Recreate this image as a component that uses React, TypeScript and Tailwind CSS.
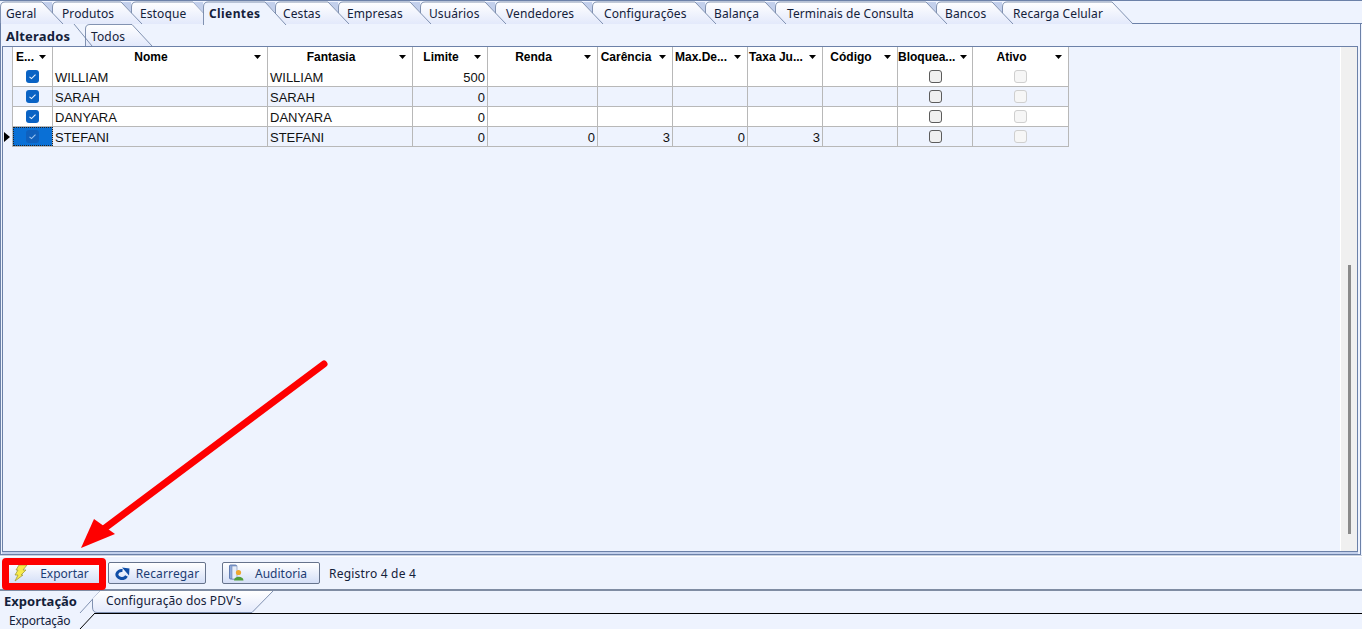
import React from 'react';

const uiFont = "font-['Noto_Sans',sans-serif]";
const gridFont = "font-['Liberation_Sans',Arial,sans-serif]";

const topTabs = [
  { label: 'Geral', start: 0, next: 52, textClass: 'pl-[6px]' },
  { label: 'Produtos', start: 52, next: 131, textClass: 'pl-[10px]' },
  { label: 'Estoque', start: 131, next: 203, textClass: 'pl-[9px]' },
  { label: 'Clientes', start: 203, next: 275, textClass: 'pl-[6px]', active: true },
  { label: 'Cestas', start: 275, next: 338, textClass: 'pl-[8px]' },
  { label: 'Empresas', start: 338, next: 420, textClass: 'pl-[9px]' },
  { label: 'Usuários', start: 420, next: 495, textClass: 'pl-[9px]' },
  { label: 'Vendedores', start: 495, next: 592, textClass: 'pl-[11px]' },
  { label: 'Configurações', start: 592, next: 705, textClass: 'pl-[12px]' },
  { label: 'Balança', start: 705, next: 775, textClass: 'pl-[9px]' },
  { label: 'Terminais de Consulta', start: 775, next: 936, textClass: 'pl-[12px]' },
  { label: 'Bancos', start: 936, next: 1002, textClass: 'pl-[9px]' },
  { label: 'Recarga Celular', start: 1002, next: 1122, textClass: 'pl-[11px]' },
];

const columns = [
  { label: 'E...', width: 'w-[40px]', left: true },
  { label: 'Nome', width: 'w-[215px]' },
  { label: 'Fantasia', width: 'w-[145px]' },
  { label: 'Limite', width: 'w-[75px]' },
  { label: 'Renda', width: 'w-[110px]' },
  { label: 'Carência', width: 'w-[75px]' },
  { label: 'Max.De...', width: 'w-[75px]' },
  { label: 'Taxa Ju...', width: 'w-[75px]' },
  { label: 'Código', width: 'w-[75px]' },
  { label: 'Bloquea...', width: 'w-[75px]' },
  { label: 'Ativo', width: 'w-[96px]' },
];

const rows = [
  { nome: 'WILLIAM', fantasia: 'WILLIAM', limite: '500', renda: '', carencia: '', max: '', taxa: '' },
  { nome: 'SARAH', fantasia: 'SARAH', limite: '0', renda: '', carencia: '', max: '', taxa: '' },
  { nome: 'DANYARA', fantasia: 'DANYARA', limite: '0', renda: '', carencia: '', max: '', taxa: '' },
  { nome: 'STEFANI', fantasia: 'STEFANI', limite: '0', renda: '0', carencia: '3', max: '0', taxa: '3' },
];

function TopTab({ tab, index }: { tab: (typeof topTabs)[number]; index: number }) {
  const w = tab.next - tab.start;
  const h = tab.active ? 24 : 23;
  const shape = `M0.5 ${h} L0.5 6 Q0.5 1 5 1 L${w - 10} 1 L${w + 11} ${h}`;
  return (
    <div
      className={`relative h-[23px] ${tab.textClass} ${tab.active ? 'font-bold tracking-[0.4px]' : 'tracking-[0.1px]'}`}
      style={{ width: w, zIndex: tab.active ? 50 : 30 - index }}
    >
      <svg className="absolute left-0 top-0 overflow-visible" width={w + 11} height={h}>
        {index > 0 && <path d="M-10 1 L0 1 L0 11 Z" fill="#c3d0ec" />}
        <path d={`${shape} Z`} fill={tab.active ? '#eef3fe' : 'url(#tabFill)'} />
        <path d={shape} fill="none" stroke="#64789d" strokeWidth="0.8" />
      </svg>
      <span className="relative block pt-[4px] leading-[18px] whitespace-nowrap">{tab.label}</span>
    </div>
  );
}

function Caret() {
  return (
    <svg width="7" height="4" viewBox="0 0 7 4" className="ml-[5px] mr-[6px] shrink-0">
      <path d="M0 0 H7 L3.5 4 Z" fill="#000" />
    </svg>
  );
}

function Check({ dim = false }: { dim?: boolean }) {
  return (
    <svg width="13" height="13" viewBox="0 0 13 13">
      <rect x="0" y="0" width="13" height="13" rx="3" fill={dim ? '#0f60bd' : '#0a63c4'} />
      <path d="M3.5 6.8 L5.5 8.6 L9.5 4.6" fill="none" stroke={dim ? '#9cc4ee' : '#e8f1fb'} strokeWidth="1.1" />
    </svg>
  );
}

function EmptyBox({ disabled = false }: { disabled?: boolean }) {
  return (
    <div
      className={`w-[13px] h-[13px] rounded-[3px] border ${
        disabled ? 'border-[#cfcfcf] bg-[#f6f6f6]' : 'border-[#5c5c5c] bg-[#f0f0f0]'
      }`}
    />
  );
}

function TextCell({ width, children, right = false }: { width: string; children?: React.ReactNode; right?: boolean }) {
  return (
    <div
      className={`${width} h-full shrink-0 pt-[2px] border-r border-[#b8b8b8] flex items-center whitespace-nowrap ${
        right ? 'justify-end pr-[2px]' : 'pl-[2px]'
      }`}
    >
      {children}
    </div>
  );
}

function BoxCell({ width, children }: { width: string; children: React.ReactNode }) {
  return (
    <div className={`${width} h-full shrink-0 border-r border-[#b8b8b8] flex items-center justify-center`}>
      {children}
    </div>
  );
}

function DataGrid() {
  return (
    <div className={`text-[13px] text-[#111] ${gridFont}`}>
      <div className="flex h-[20px] pl-[9px]">
        <div className="flex h-full bg-white border-l border-[#b8b8b8]">
          {columns.map((col) => (
            <div key={col.label} className={`${col.width} h-full flex items-center border-r border-[#b8b8b8] text-[12px] font-bold text-black`}>
              <span className={`flex-1 whitespace-nowrap ${col.left ? 'pl-[3px]' : 'text-center'}`}>{col.label}</span>
              <Caret />
            </div>
          ))}
        </div>
      </div>
      {rows.map((row, i) => {
        const last = i === rows.length - 1;
        return (
          <div key={row.nome} className="flex h-[20px]">
            <div className="w-[9px] h-full flex items-center justify-start pl-[1px]">
              {last && (
                <svg width="6" height="10" viewBox="0 0 6 10">
                  <path d="M0 0 L6 5 L0 10 Z" fill="#000" />
                </svg>
              )}
            </div>
            <div className={`flex h-full border-l border-b border-[#b8b8b8] ${i % 2 === 0 ? 'bg-white' : 'bg-[#eef3fe]'}`}>
              <div
                className={`w-[40px] h-full shrink-0 border-r border-[#b8b8b8] flex items-center justify-center ${
                  last ? 'bg-[#0a70d6] outline-1 outline-dotted -outline-offset-1 outline-[#222]' : ''
                }`}
              >
                <Check dim={last} />
              </div>
              <TextCell width="w-[215px]">{row.nome}</TextCell>
              <TextCell width="w-[145px]">{row.fantasia}</TextCell>
              <TextCell width="w-[75px]" right>{row.limite}</TextCell>
              <TextCell width="w-[110px]" right>{row.renda}</TextCell>
              <TextCell width="w-[75px]" right>{row.carencia}</TextCell>
              <TextCell width="w-[75px]" right>{row.max}</TextCell>
              <TextCell width="w-[75px]" right>{row.taxa}</TextCell>
              <TextCell width="w-[75px]" />
              <BoxCell width="w-[75px]"><EmptyBox /></BoxCell>
              <BoxCell width="w-[96px]"><EmptyBox disabled /></BoxCell>
            </div>
          </div>
        );
      })}
    </div>
  );
}

function BoltIcon() {
  return (
    <svg width="15" height="18" viewBox="0 0 15 18" className="shrink-0">
      <path d="M6 1 L14 1 L10 6 L13 6 L8 11 L10 11 L2 17 L5 11 L2 11 L5 6 L3 6 Z" fill="#f7ea4a" stroke="#a39c3c" strokeWidth="0.8" />
    </svg>
  );
}

function ReloadIcon() {
  return (
    <svg width="16" height="13" viewBox="0 0 16 13" className="shrink-0">
      <path d="M12.5 9 A5 4 0 1 1 8.5 3.5" fill="none" stroke="#0f4da6" strokeWidth="3" />
      <path d="M8 0.5 L15.5 1.5 L15 8.5 Z" fill="#0f4da6" />
    </svg>
  );
}

function AuditIcon() {
  return (
    <svg width="15" height="18" viewBox="0 0 15 18" className="shrink-0">
      <rect x="0.5" y="1" width="7" height="14" rx="1" fill="#8fa9db" stroke="#4a68a3" strokeWidth="0.8" />
      <rect x="3" y="2" width="5" height="13" fill="#e6edf9" stroke="#6f87b3" strokeWidth="0.6" />
      <circle cx="9.5" cy="8.5" r="2.6" fill="#eda72f" />
      <path d="M5 16.5 C5 11.5 14.5 11.5 14.5 16.5 Z" fill="#4f9d3a" />
    </svg>
  );
}

function ToolButton({ width, icon, label, iconClass, labelClass = '' }: { width: string; icon: React.ReactNode; label: string; iconClass: string; labelClass?: string }) {
  return (
    <button className={`${width} h-[22px] flex items-center rounded-[2px] border border-[#66738c] bg-linear-to-b from-[#ffffff] to-[#d5dff7] text-[#1c3c73] text-[12px] leading-none`}>
      <span className={iconClass}>{icon}</span>
      <span className={`flex-1 pt-[1px] text-center whitespace-nowrap ${labelClass}`}>{label}</span>
    </button>
  );
}

export default function App() {
  return (
    <div className={`relative w-[1362px] h-[629px] overflow-hidden flex flex-col bg-[#eef3fe] text-[12px] text-[#14213a] ${uiFont}`}>
      <svg className="absolute w-0 h-0">
        <defs>
          <linearGradient id="tabFill" x1="0" y1="0" x2="0" y2="1">
            <stop offset="0" stopColor="#ffffff" />
            <stop offset="1" stopColor="#e3e9fb" />
          </linearGradient>
        </defs>
      </svg>

      {/* abas de cima */}
      <div className="relative h-[24px] shrink-0 flex border-t border-b border-[#6c81a8]">
        {topTabs.map((tab, i) => (
          <TopTab key={tab.label} tab={tab} index={i} />
        ))}
      </div>

      {/* painel principal */}
      <div className="flex-1 min-h-0 mr-[1px] flex flex-col border-x border-b border-[#6c81a8] pr-[2px] pl-[1px]">
        <div className="relative h-[22px] shrink-0 flex">
          <div className="relative w-[83px] h-full pl-[4px] z-10 font-bold text-[13px] tracking-[0.2px]">
            <svg className="absolute left-0 top-0 overflow-visible" width="96" height="22">
              <path d="M72 0 L90 22" stroke="#64789d" strokeWidth="0.8" fill="none" />
            </svg>
            <span className="relative block pt-[3px] leading-[18px]">Alterados</span>
          </div>
          <div className="relative w-[60px] h-full pl-[6px] tracking-[0.14px]">
            <svg className="absolute left-0 top-0 overflow-visible" width="70" height="22">
              <path d="M0.5 22 L0.5 5 Q0.5 0.5 5 0.5 L47 0.5 L67 22 Z" fill="url(#tabFill)" />
              <path d="M0.5 22 L0.5 5 Q0.5 0.5 5 0.5 L47 0.5 L67 22" fill="none" stroke="#64789d" strokeWidth="0.8" />
            </svg>
            <span className="relative block pt-[4px] leading-[18px]">Todos</span>
          </div>
        </div>
        <div className="flex-1 min-h-0 flex border border-[#6c81a8] bg-[#eef3fe]">
          <div className="flex-1 min-w-0">
            <DataGrid />
          </div>
          <div className="w-[17px] shrink-0 bg-[#f0f0f0] border-l border-white flex justify-center pt-[218px]">
            <div className="w-[3px] h-[269px] bg-[#8a8a8a]" />
          </div>
        </div>
        <div className="h-[2px] shrink-0 bg-[#c3d0ec]" />
      </div>

      {/* barra de botoes */}
      <div className="h-[36px] shrink-0 flex items-center pl-[7px] pt-[1px] border-t border-[#c9d2e2] shadow-[inset_0_1px_0_#ffffff] border-b-2 border-b-[#7f8ca3]">
        <ToolButton width="w-[98px]" icon={<BoltIcon />} label="Exportar" iconClass="ml-[5px] mr-[3px]" labelClass="pr-[6px]" />
        <div className="w-[3px]" />
        <ToolButton width="w-[98px]" icon={<ReloadIcon />} label="Recarregar" iconClass="ml-[5px]" labelClass="tracking-[0.15px]" />
        <div className="w-[16px]" />
        <ToolButton width="w-[98px]" icon={<AuditIcon />} label="Auditoria" iconClass="ml-[6px] mr-[2px]" labelClass="pr-[3px]" />
        <span className="ml-[9px] pt-[1px] whitespace-nowrap tracking-[0.2px]">Registro 4 de 4</span>
      </div>

      {/* abas de baixo */}
      <div className="relative h-[22px] shrink-0 flex">
        <div className="relative w-[92px] h-full pl-[4px] font-bold text-[13px]">
          <span className="block pt-[1px] leading-[18px]">Exportação</span>
        </div>
        <div className="relative w-[182px] h-full pl-[14px] tracking-[0.1px]">
          <svg className="absolute left-0 top-0 overflow-visible" width="182" height="22">
            <path d="M-12 22 L8 0" stroke="#64789d" strokeWidth="0.8" fill="none" />
            <path d="M0.5 16 Q0.5 21.5 5 21.5 L160 21.5 L181 0 L8 0 L0.5 8 Z" fill="url(#tabFill)" />
            <path d="M0.5 8 L0.5 16 Q0.5 21.5 5 21.5 L160 21.5 L181 0" fill="none" stroke="#64789d" strokeWidth="0.8" />
          </svg>
          <span className="relative block pt-[1px] leading-[18px] whitespace-nowrap">Configuração dos PDV's</span>
        </div>
      </div>
      <div className="h-[16px] shrink-0 flex">
        <div className="relative w-[95px] h-full pl-[9px]">
          <svg className="absolute left-0 top-0 overflow-visible" width="95" height="16">
            <path d="M80 16 L95 0" stroke="#000" fill="none" />
          </svg>
          <span className="block leading-[16px] whitespace-nowrap tracking-[-0.2px]">Exportação</span>
        </div>
        <div className="flex-1 border-t border-black" />
      </div>

      {/* marcacoes em vermelho sobre a tela */}
      <div className="absolute left-[2px] top-[558px] w-[104px] h-[32px] rounded-[4px] border-[7px] border-[#fe0000] z-[60]" />
      <svg className="absolute left-0 top-0 z-[60] pointer-events-none" width="1362" height="629">
        <path d="M324 364 L105 528" stroke="#fe0000" strokeWidth="7" strokeLinecap="round" fill="none" />
        <path d="M81 548 L94 519 L115 534 Z" fill="#fe0000" />
      </svg>
    </div>
  );
}
